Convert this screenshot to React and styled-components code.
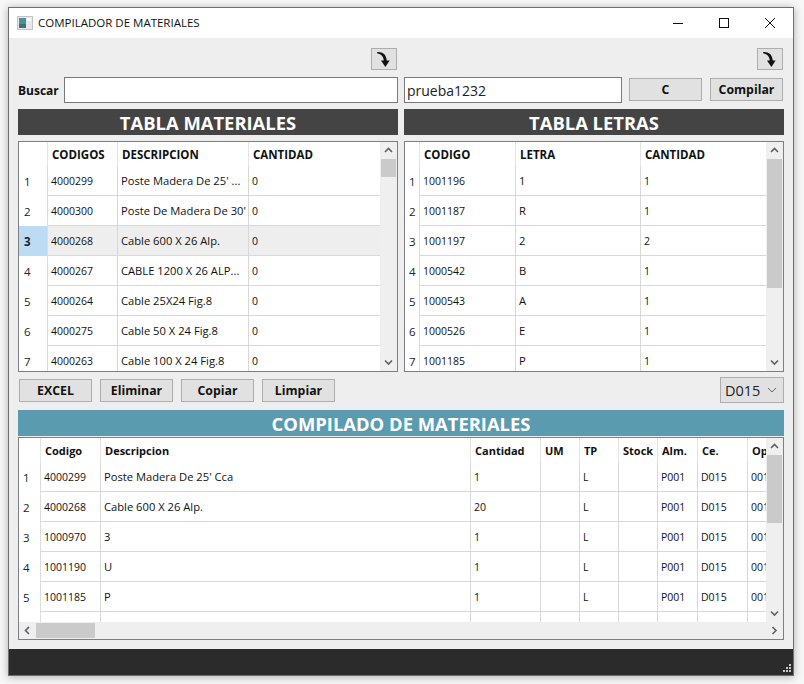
import React from 'react';
import styled, { createGlobalStyle } from 'styled-components';

const GlobalStyle = createGlobalStyle`
  html, body {
    margin: 0;
    padding: 0;
    background: #f7f7f7;
  }
  body {
    font-family: "Open Sans", "Noto Sans", sans-serif;
    color: #111;
  }
`;

const Page = styled.div`
  width: 804px;
  height: 684px;
  padding: 7px 10px 8px 8px;
  box-sizing: border-box;
`;

const Window = styled.div`
  width: 786px;
  height: 669px;
  box-sizing: border-box;
  border: 1px solid #6e6e6e;
  box-shadow: 0 1px 8px rgba(0, 0, 0, 0.3);
  background: #eeeeee;
  display: flex;
  flex-direction: column;
`;

const TitleBar = styled.div`
  height: 30px;
  flex: none;
  background: #fff;
  display: flex;
  align-items: center;
  padding-left: 8px;
`;

const TitleText = styled.span`
  font-size: 11.5px;
  margin-left: 5px;
  padding-bottom: 2px;
  color: #111;
`;

const WinControls = styled.div`
  margin-left: auto;
  display: flex;
  height: 100%;
`;

const WinButton = styled.div`
  width: 46px;
  height: 100%;
  display: flex;
  align-items: center;
  justify-content: center;
`;

const Content = styled.div`
  flex: 1;
  min-height: 0;
  padding: 10px 9px 9px 9px;
  display: flex;
  flex-direction: column;
`;

const ArrowRow = styled.div`
  display: grid;
  grid-template-columns: 380px 380px;
  column-gap: 6px;
  height: 22px;
`;

const ArrowCell = styled.div`
  display: flex;
  justify-content: flex-end;
  padding-right: ${p => p.$inset}px;
`;

const ArrowButton = styled.button`
  width: 26px;
  height: 22px;
  padding: 0;
  background: #e1e1e1;
  border: 1px solid #adadad;
  display: flex;
  align-items: center;
  justify-content: center;
`;

const SearchRow = styled.div`
  display: grid;
  grid-template-columns: 380px 218px 73px 73px;
  column-gap: 0;
  margin-top: 7px;
  height: 26px;
`;

const SearchLeft = styled.div`
  display: flex;
  align-items: center;
`;

const SearchLabel = styled.label`
  font-weight: 700;
  font-size: 12px;
  width: 46px;
  flex: none;
`;

const TextInput = styled.input`
  width: ${p => p.$w}px;
  height: 26px;
  box-sizing: border-box;
  border: 1px solid #7a7a7a;
  background: #fff;
  font-family: inherit;
  font-size: 14px;
  color: #222;
  padding: 0 2px;
  outline: none;
`;

const SearchInputCell = styled.div`
  margin-left: 6px;
`;

const PushButton = styled.button`
  width: 73px;
  height: 23px;
  box-sizing: border-box;
  background: #e1e1e1;
  border: 1px solid #adadad;
  font-family: inherit;
  font-weight: 700;
  font-size: 12.3px;
  color: #111;
  padding: 0;
  flex: none;
`;

const SearchButtons = styled.div`
  display: flex;
  gap: 8px;
  margin-left: 13px;
  padding-top: 1px;
  grid-column: 3 / 5;
`;

const SectionRow = styled.div`
  display: grid;
  grid-template-columns: 380px 380px;
  column-gap: 6px;
  margin-top: 6px;
`;

const SectionTitle = styled.div`
  height: 26px;
  background: ${p => p.$bg};
  color: #fff;
  font-weight: 700;
  font-size: 18.4px;
  line-height: 28px;
  text-align: center;
`;

const Frame = styled.div`
  box-sizing: border-box;
  height: ${p => p.$h}px;
  margin-top: ${p => p.$gap || 0}px;
  border: 1px solid #7d7d86;
  background: #fff;
  display: flex;
  flex-direction: column;
  overflow: hidden;
`;

const FrameMain = styled.div`
  flex: 1;
  min-height: 0;
  display: flex;
`;

const TableViewport = styled.div`
  flex: 1;
  min-width: 0;
  overflow: hidden;
`;

const TableGrid = styled.div`
  display: grid;
  grid-template-columns: ${p => p.$cols};
  grid-template-rows: 24px;
  grid-auto-rows: 30px;
  width: max-content;
`;

const HeaderCell = styled.div`
  box-sizing: border-box;
  padding: 0 0 0 4px;
  font-weight: 700;
  font-size: ${p => p.$size || 11}px;
  line-height: 25px;
  white-space: nowrap;
  overflow: hidden;
  border-right: ${p => (p.$last ? 'none' : '1px solid #e4e4e4')};
  color: #111;
`;

const RowNum = styled.div`
  box-sizing: border-box;
  padding: 1px 0 0 ${p => p.$pad}px;
  font-size: 11.5px;
  line-height: 30px;
  background: ${p => (p.$on ? '#bcdcf4' : '#fff')};
  font-weight: ${p => (p.$on ? 700 : 400)};
  border-right: 1px solid #dcdcdc;
  color: #222;
`;

const Cell = styled.div`
  box-sizing: border-box;
  padding-left: 3px;
  font-size: ${p => (p.$text ? 11.2 : 10.5)}px;
  line-height: ${p => (p.$text ? 29 : 30)}px;
  white-space: nowrap;
  overflow: hidden;
  background: ${p => (p.$on ? '#eeeeee' : '#fff')};
  border-right: ${p => (p.$last ? 'none' : '1px solid #d8d8d8')};
  border-bottom: 1px solid #d8d8d8;
  color: #111;
`;

const VScroll = styled.div`
  width: 17px;
  flex: none;
  background: #efefef;
  display: flex;
  flex-direction: column;
`;

const ScrollArrow = styled.div`
  flex: none;
  width: 17px;
  height: 17px;
  display: flex;
  align-items: center;
  justify-content: center;
`;

const VThumb = styled.div`
  width: 15px;
  margin: 0 1px;
  height: ${p => p.$h}px;
  background: #cacaca;
  flex: none;
`;

const Spring = styled.div`
  flex: 1;
`;

const HScroll = styled.div`
  height: 17px;
  flex: none;
  background: #efefef;
  display: flex;
  align-items: center;
`;

const HThumb = styled.div`
  width: 59px;
  height: 15px;
  background: #cacaca;
`;

const ActionRow = styled.div`
  display: flex;
  align-items: center;
  height: 26px;
  margin-top: 5px;
  padding-left: 1px;
  gap: 8px;
`;

const Combo = styled.div`
  margin-left: auto;
  width: 64px;
  height: 26px;
  box-sizing: border-box;
  background: #e1e1e1;
  border: 1px solid #adadad;
  display: flex;
  align-items: center;
  justify-content: space-between;
  padding: 0 6px 0 4px;
  font-size: 14.5px;
  color: #222;
`;

const SectionFull = styled.div`
  margin-top: 7px;
`;

const StatusBar = styled.div`
  height: 26px;
  flex: none;
  background: #2b2b2b;
  display: flex;
  justify-content: flex-end;
  align-items: flex-end;
`;

const matCols = '29px 70px 131px 131px';
const letCols = '15px 96px 125px 125px';
const compCols = '22px 60px 370px 70px 39px 39px 39px 40px 50px 40px';

const materiales = [
  ['4000299', "Poste Madera De 25' ...", '0'],
  ['4000300', "Poste De Madera De 30'", '0'],
  ['4000268', 'Cable 600 X 26 Alp.', '0'],
  ['4000267', 'CABLE 1200 X 26 ALP...', '0'],
  ['4000264', 'Cable 25X24 Fig.8', '0'],
  ['4000275', 'Cable 50 X 24 Fig.8', '0'],
  ['4000263', 'Cable 100 X 24 Fig.8', '0'],
];

const letras = [
  ['1001196', '1', '1'],
  ['1001187', 'R', '1'],
  ['1001197', '2', '2'],
  ['1000542', 'B', '1'],
  ['1000543', 'A', '1'],
  ['1000526', 'E', '1'],
  ['1001185', 'P', '1'],
];

const compilado = [
  ['4000299', "Poste Madera De 25' Cca", '1'],
  ['4000268', 'Cable 600 X 26 Alp.', '20'],
  ['1000970', '3', '1'],
  ['1001190', 'U', '1'],
  ['1001185', 'P', '1'],
];

const CurveArrow = () => (
  <svg width="16" height="17" viewBox="0 0 16 17">
    <path d="M1 1 C6 0.5 10.5 3 10.8 10 L7.8 10 C7.6 5.5 5 3 1.5 2.6 Z" fill="#111" />
    <path d="M5 9.5 L13.6 9.5 L9.4 16 Z" fill="#111" />
  </svg>
);

const AppIcon = () => (
  <svg width="16" height="14" viewBox="0 0 16 14">
    <rect x="0.5" y="0.5" width="15" height="13" fill="#e9e9e9" stroke="#c4c4c4" />
    <rect x="2" y="2" width="7" height="10" fill="#4f9296" />
    <rect x="2" y="8" width="7" height="4" fill="#3d7378" />
    <rect x="10" y="2" width="4" height="3" fill="#fafafa" />
  </svg>
);

const Chevron = ({ dir }) => {
  const pts = {
    up: '1,6 4.5,2.5 8,6',
    down: '1,2.5 4.5,6 8,2.5',
    left: '6,1 2.5,4.5 6,8',
    right: '2.5,1 6,4.5 2.5,8',
  }[dir];
  return (
    <svg width="9" height="9" viewBox="0 0 9 9">
      <polyline points={pts} fill="none" stroke="#606060" strokeWidth="1.6" />
    </svg>
  );
};

const Grip = () => (
  <svg width="12" height="12" viewBox="0 0 12 12" fill="#c8c8c8">
    <rect x="8" y="1" width="2" height="2" />
    <rect x="5" y="4" width="2" height="2" />
    <rect x="8" y="4" width="2" height="2" />
    <rect x="2" y="7" width="2" height="2" />
    <rect x="5" y="7" width="2" height="2" />
    <rect x="8" y="7" width="2" height="2" />
  </svg>
);

function VerticalBar({ thumb }) {
  return (
    <VScroll>
      <ScrollArrow><Chevron dir="up" /></ScrollArrow>
      <VThumb $h={thumb} />
      <Spring />
      <ScrollArrow><Chevron dir="down" /></ScrollArrow>
    </VScroll>
  );
}

function SmallTable({ cols, headers, rows, numPad, selected }) {
  return (
    <Frame $h={231}>
      <FrameMain>
        <TableViewport>
          <TableGrid $cols={cols}>
            <HeaderCell />
            {headers.map((h, i) => (
              <HeaderCell key={h} $size={11.5} $last={i === headers.length - 1}>{h}</HeaderCell>
            ))}
            {rows.map((row, r) => (
              <React.Fragment key={r}>
                <RowNum $pad={numPad} $on={selected === r}>{r + 1}</RowNum>
                {row.map((v, c) => (
                  <Cell key={c} $text={c === 1} $on={selected === r} $last={c === row.length - 1}>{v}</Cell>
                ))}
              </React.Fragment>
            ))}
          </TableGrid>
        </TableViewport>
        <VerticalBar thumb={selected !== undefined ? 18 : 129} />
      </FrameMain>
    </Frame>
  );
}

const compHeaders = ['Codigo', 'Descripcion', 'Cantidad', 'UM', 'TP', 'Stock', 'Alm.', 'Ce.', 'Op'];

function CompiledTable() {
  const shown = [...compilado, ['', '', '']];
  return (
    <Frame $h={203} $gap={1}>
      <FrameMain>
        <TableViewport>
          <TableGrid $cols={compCols}>
            <HeaderCell />
            {compHeaders.map(h => (
              <HeaderCell key={h}>{h}</HeaderCell>
            ))}
            {shown.map((row, r) => {
              const filled = r < compilado.length;
              return (
                <React.Fragment key={r}>
                  <RowNum $pad={4}>{filled ? r + 1 : ''}</RowNum>
                  <Cell>{row[0]}</Cell>
                  <Cell $text>{row[1]}</Cell>
                  <Cell>{row[2]}</Cell>
                  <Cell />
                  <Cell>{filled ? 'L' : ''}</Cell>
                  <Cell />
                  <Cell>{filled ? 'P001' : ''}</Cell>
                  <Cell>{filled ? 'D015' : ''}</Cell>
                  <Cell>{filled ? '001' : ''}</Cell>
                </React.Fragment>
              );
            })}
          </TableGrid>
        </TableViewport>
        <VerticalBar thumb={68} />
      </FrameMain>
      <HScroll>
        <ScrollArrow><Chevron dir="left" /></ScrollArrow>
        <HThumb />
        <Spring />
        <ScrollArrow><Chevron dir="right" /></ScrollArrow>
      </HScroll>
    </Frame>
  );
}

export default function App() {
  return (
    <Page>
      <GlobalStyle />
      <Window>
        <TitleBar>
          <AppIcon />
          <TitleText>COMPILADOR DE MATERIALES</TitleText>
          <WinControls>
            <WinButton>
              <svg width="10" height="10" viewBox="0 0 10 10"><path d="M0 5.5H10" stroke="#111" /></svg>
            </WinButton>
            <WinButton>
              <svg width="10" height="10" viewBox="0 0 10 10"><rect x="0.5" y="0.5" width="9" height="9" fill="none" stroke="#111" /></svg>
            </WinButton>
            <WinButton>
              <svg width="10" height="10" viewBox="0 0 10 10"><path d="M0 0L10 10M10 0L0 10" stroke="#111" /></svg>
            </WinButton>
          </WinControls>
        </TitleBar>
        <Content>
          <ArrowRow>
            <ArrowCell $inset={1}><ArrowButton><CurveArrow /></ArrowButton></ArrowCell>
            <ArrowCell $inset={1}><ArrowButton><CurveArrow /></ArrowButton></ArrowCell>
          </ArrowRow>
          <SearchRow>
            <SearchLeft>
              <SearchLabel>Buscar</SearchLabel>
              <TextInput $w={334} readOnly value="" />
            </SearchLeft>
            <SearchInputCell>
              <TextInput $w={218} readOnly value="prueba1232" />
            </SearchInputCell>
            <SearchButtons>
              <PushButton>C</PushButton>
              <PushButton>Compilar</PushButton>
            </SearchButtons>
          </SearchRow>
          <SectionRow>
            <SectionTitle $bg="#444444">TABLA MATERIALES</SectionTitle>
            <SectionTitle $bg="#444444">TABLA LETRAS</SectionTitle>
          </SectionRow>
          <SectionRow>
            <SmallTable
              cols={matCols}
              headers={['CODIGOS', 'DESCRIPCION', 'CANTIDAD']}
              rows={materiales}
              numPad={5}
              selected={2}
            />
            <SmallTable
              cols={letCols}
              headers={['CODIGO', 'LETRA', 'CANTIDAD']}
              rows={letras}
              numPad={4}
            />
          </SectionRow>
          <ActionRow>
            <PushButton>EXCEL</PushButton>
            <PushButton>Eliminar</PushButton>
            <PushButton>Copiar</PushButton>
            <PushButton>Limpiar</PushButton>
            <Combo>
              D015
              <svg width="10" height="6" viewBox="0 0 10 6"><polyline points="1,1 5,5 9,1" fill="none" stroke="#666" /></svg>
            </Combo>
          </ActionRow>
          <SectionFull>
            <SectionTitle $bg="#5b9bb0">COMPILADO DE MATERIALES</SectionTitle>
          </SectionFull>
          <CompiledTable />
        </Content>
        <StatusBar><Grip /></StatusBar>
      </Window>
    </Page>
  );
}
